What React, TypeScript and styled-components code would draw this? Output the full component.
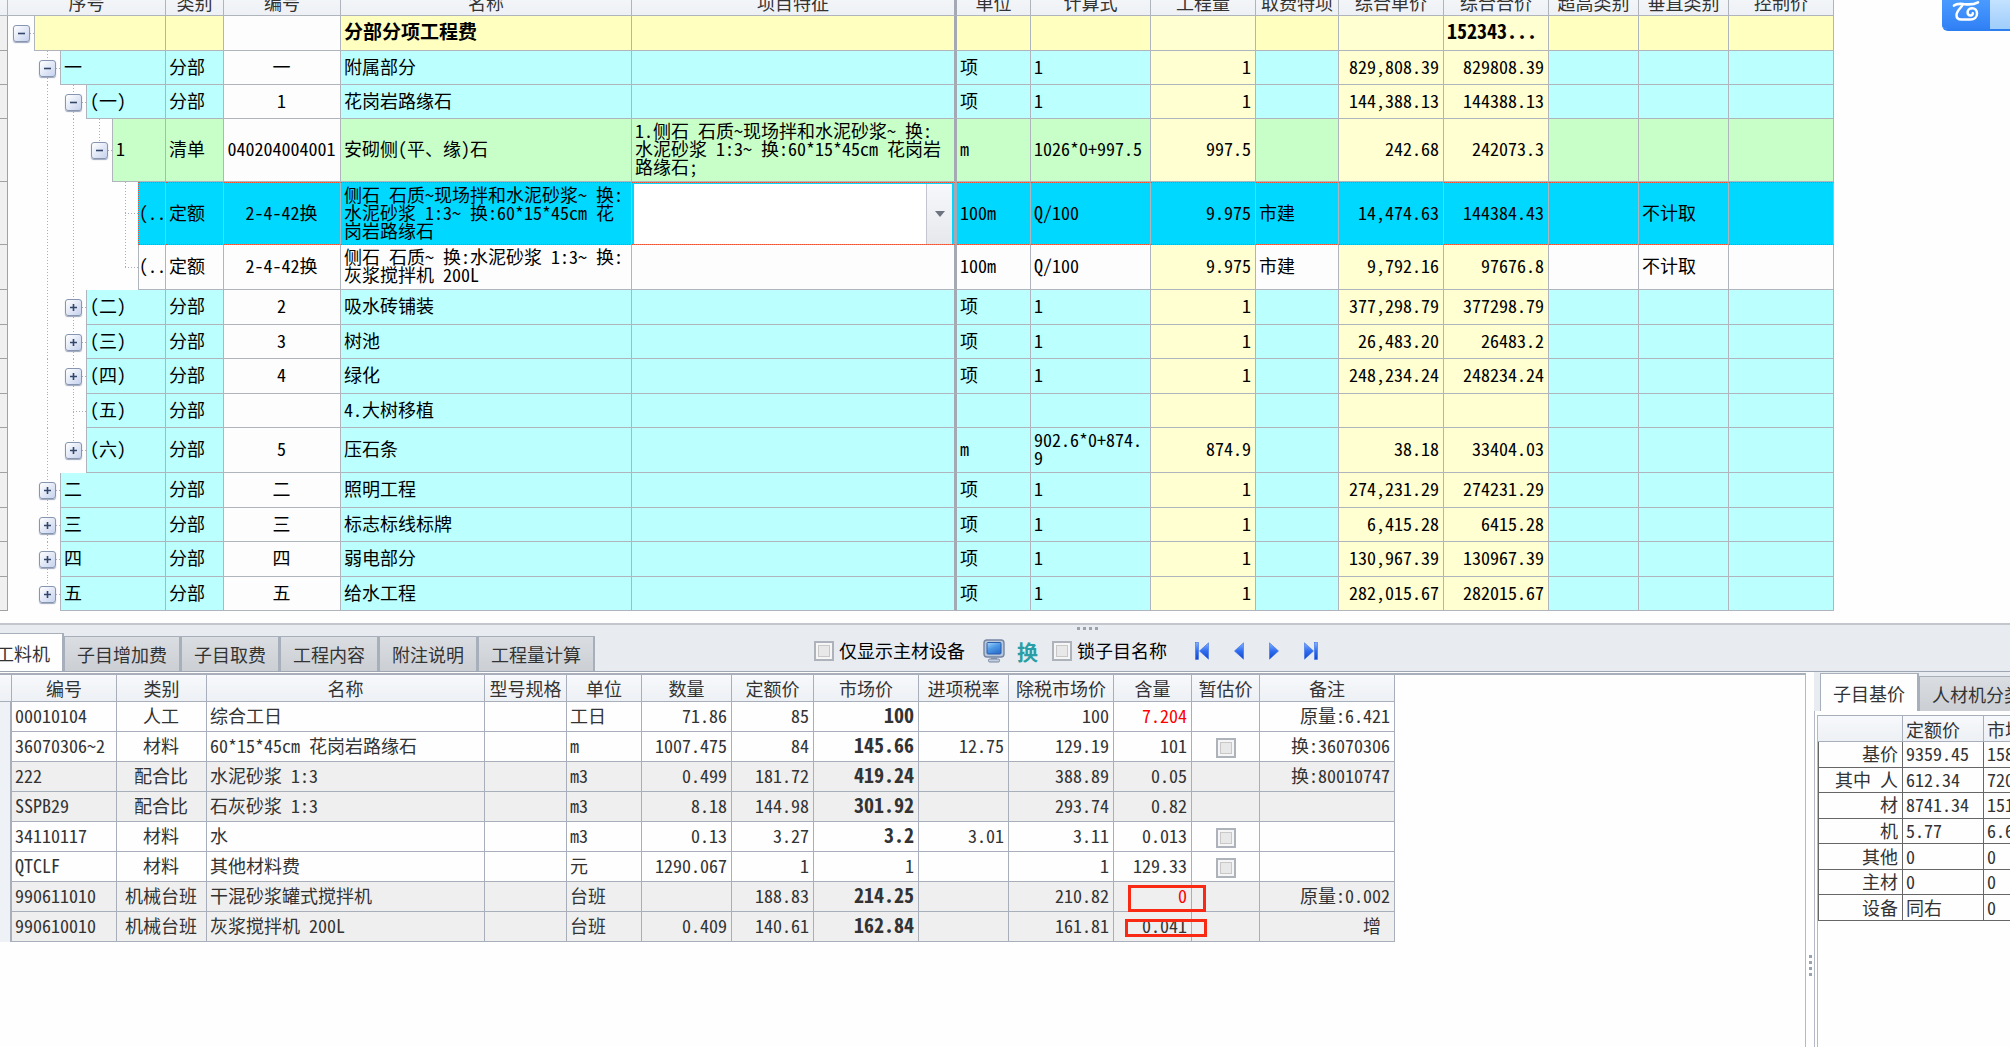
import React from 'react';
import styled, { createGlobalStyle, css } from 'styled-components';

const LINE = '#b0b4bd';
const LOWER_LINE = '#a8afbb';
const PALE_YELLOW = '#ffffd2';
const PLAIN = '#fdfdfd';

const GlobalStyle = createGlobalStyle`
  *, *::before, *::after { box-sizing: border-box; }
  body {
    margin: 0;
    background: #fefefe;
    color: #000;
    font-family: "Noto Sans Mono CJK SC", "Noto Sans CJK SC", monospace;
    font-size: 18px;
    line-height: 18px;
  }
  button, input, select { font: inherit; color: inherit; margin: 0; padding: 0; }
`;

const Page = styled.main`
  display: flex;
  flex-direction: column;
  min-height: 100vh;
  position: relative;
  overflow: hidden;
`;

/* ---------- upper grid ---------- */

const BudgetPane = styled.section`
  margin-top: -10px;
  padding-bottom: 12px;
`;

const Grid = styled.table`
  table-layout: fixed;
  border-collapse: separate;
  border-spacing: 0;
  width: 1px;
`;

const HeadCell = styled.th<{ $thick?: boolean }>`
  height: 26px;
  padding: 0 2px 2px;
  font-weight: 400;
  color: #333;
  white-space: nowrap;
  overflow: hidden;
  text-align: center;
  background: linear-gradient(#f7f9fc, #edf0f4);
  border-right: ${(p) => (p.$thick ? '3px solid #a4a9b4' : `1px solid ${LINE}`)};
  border-bottom: 1px solid ${LINE};
`;

const Gutter = styled.td`
  background: #f0f0f0;
  border-right: 1px solid #a2a2a2;
  border-bottom: 1px solid #a2a2a2;
`;

type Tone = 'total' | 'section' | 'list' | 'selected' | 'plain';

const toneColor: Record<Tone, string> = {
  total: '#ffffc0',
  section: '#bbffff',
  list: '#c8ffc8',
  selected: '#00d8ff',
  plain: PLAIN,
};

const selectedEdge = css`
  border-top: 1px dotted #f0502f;
  border-bottom: 1px dotted #f0502f;
`;

const GridRow = styled.tr<{ $height: number }>`
  height: ${(p) => p.$height}px;
`;

const Cell = styled.td<{
  $tone: Tone;
  $fill?: string;
  $align?: 'left' | 'center' | 'right';
  $thick?: boolean;
  $strong?: number;
}>`
  padding: 0 4px 4px 3px;
  text-align: ${(p) => p.$align ?? 'left'};
  background: ${(p) => (p.$fill && p.$tone !== 'selected' ? p.$fill : toneColor[p.$tone])};
  border-right: ${(p) => (p.$thick ? '3px solid #a4a9b4' : `1px solid ${LINE}`)};
  border-bottom: 1px solid ${LINE};
  white-space: pre;
  overflow: hidden;
  ${(p) => p.$tone === 'selected' && selectedEdge}
  ${(p) => p.$strong && css`font-weight: 700; font-size: ${p.$strong}px;`}
`;

const EditorCell = styled(Cell)`
  padding: 0 2px;
`;

const TreeCell = styled.td`
  padding: 0;
  background: #fefefe;
`;

const TreeLine = styled.div<{ $height: number }>`
  display: flex;
  height: ${(p) => p.$height}px;
`;

type Guide = 'none' | 'through' | 'tee' | 'end' | 'root';

const dotsDown = 'repeating-linear-gradient(180deg, #a9aeb8 0 1px, transparent 1px 3px)';
const dotsAcross = 'repeating-linear-gradient(90deg, #a9aeb8 0 1px, transparent 1px 3px)';

const guideStyles: Record<Guide, ReturnType<typeof css> | string> = {
  none: '',
  through: css`background: ${dotsDown} center top / 1px 100% no-repeat;`,
  tee: css`
    background:
      ${dotsDown} center top / 1px 100% no-repeat,
      ${dotsAcross} right center / 50% 1px no-repeat;
  `,
  end: css`
    background:
      ${dotsDown} center top / 1px 50% no-repeat,
      ${dotsAcross} right center / 50% 1px no-repeat;
  `,
  root: css`background: ${dotsAcross} right center / 50% 1px no-repeat;`,
};

const GuideSlot = styled.span<{ $guide: Guide }>`
  flex: 0 0 26px;
  display: flex;
  align-items: center;
  justify-content: center;
  ${(p) => guideStyles[p.$guide]}
`;

const Toggle = styled.button`
  display: flex;
  align-items: center;
  justify-content: center;
  width: 17px;
  height: 17px;
  border: 1px solid #8795b0;
  border-radius: 3px;
  background: linear-gradient(135deg, #ffffff, #c6d2ee);
  box-shadow: 0 1px 1px rgba(90, 105, 140, 0.6);
`;

const TreeLabel = styled.span<{ $tone: Tone; $tight?: boolean }>`
  flex: 1;
  min-width: 0;
  display: flex;
  align-items: center;
  padding: 0 0 4px ${(p) => (p.$tight ? 0 : 3)}px;
  overflow: hidden;
  white-space: nowrap;
  background: ${(p) => toneColor[p.$tone]};
  border-left: 1px solid ${LINE};
  border-right: 1px solid ${LINE};
  border-bottom: 1px solid ${LINE};
  ${(p) => p.$tone === 'selected' && css`${selectedEdge} border-left: 1px dotted #f0502f;`}
`;

const Combo = styled.div`
  position: relative;
  height: 60px;
`;

const ComboSelect = styled.select`
  appearance: none;
  display: block;
  width: 100%;
  height: 100%;
  border: 0;
  border-radius: 0;
  background: #fff;
`;

const ComboArrow = styled.span`
  position: absolute;
  inset: 0 0 0 auto;
  width: 26px;
  display: flex;
  align-items: center;
  justify-content: center;
  pointer-events: none;
  border-left: 1px solid #c3c6cd;
  background: linear-gradient(#f6f8fb, #e6e8ec);
`;

/* ---------- band between the panes ---------- */

const Band = styled.section`
  border-top: 2px solid #c3c6cd;
  border-bottom: 1px solid #9fa6b3;
  background: #e8ebf0;
`;

const SplitHandle = styled.div`
  display: flex;
  height: 8px;
  padding: 2px 0 0 1077px;
`;

const Dots = styled.span<{ $vertical?: boolean }>`
  display: flex;
  flex-direction: ${(p) => (p.$vertical ? 'column' : 'row')};
  gap: 3px;
  i {
    width: 3px;
    height: 3px;
    background: #9aa2ae;
  }
`;

const BandRow = styled.div`
  display: flex;
  height: 38px;
  align-items: stretch;
`;

const Tabs = styled.nav<{ $cut?: boolean }>`
  display: flex;
  align-items: flex-end;
  flex: none;
  margin-left: ${(p) => (p.$cut ? '-17px' : '0')};
`;

const Tab = styled.button<{ $active?: boolean }>`
  height: ${(p) => (p.$active ? 38 : 35)}px;
  padding: 0 12px;
  border: 1px solid #a7afbb;
  border-right-width: 2px;
  border-bottom: 0;
  color: #333;
  white-space: nowrap;
  background: ${(p) => (p.$active ? '#fefefe' : 'linear-gradient(#dadee2, #cbcfd4)')};
`;

const Tools = styled.div`
  display: flex;
  align-items: center;
  margin-left: 219px;
  padding-bottom: 3px;
`;

const CheckLabel = styled.label`
  display: flex;
  align-items: center;
  gap: 5px;
  white-space: nowrap;
`;

const CheckText = styled.span`
  padding-bottom: 2px;
`;

const Check = styled.input`
  appearance: none;
  display: inline-block;
  flex: none;
  width: 20px;
  height: 20px;
  vertical-align: middle;
  border: 2px solid #aeb2ba;
  background: #e8e8e8;
  box-shadow: inset 0 0 0 2px #f6f6f6, inset 0 0 0 3px #c8c8c8;
`;

const ToolButton = styled.button<{ $gap: number }>`
  display: flex;
  align-items: center;
  border: 0;
  background: none;
  margin-left: ${(p) => p.$gap}px;
`;

const SwapText = styled.span`
  font-family: "Noto Sans CJK SC", sans-serif;
  font-size: 21px;
  line-height: 24px;
  font-weight: 700;
  color: #2a9ea6;
  padding-right: 14px;
`;

/* ---------- lower panes ---------- */

const Lower = styled.section`
  flex: 1;
  display: flex;
  min-width: 0;
`;

const ResourcePane = styled.div`
  flex: 1;
  min-width: 0;
  margin-top: 1px;
  border-top: 2px solid ${LOWER_LINE};
  border-right: 1px solid #b4bac5;
  overflow: hidden;
  color: #333;
`;

const ResHead = styled(HeadCell)`
  height: 27px;
  padding: 0 2px;
  border-color: ${LOWER_LINE};
`;

const ResGutter = styled.td`
  background: #eef1f5;
  border-right: 2px solid ${LOWER_LINE};
`;

const ResRow = styled.tr<{ $grey?: boolean }>`
  height: 30px;
  background: ${(p) => (p.$grey ? '#efefef' : '#fefefe')};
`;

const ResCell = styled.td<{ $align?: 'left' | 'center' | 'right'; $strong?: boolean; $alert?: boolean }>`
  position: relative;
  padding: 0 4px 4px 3px;
  text-align: ${(p) => p.$align ?? 'left'};
  white-space: pre;
  border-right: 1px solid ${LOWER_LINE};
  border-bottom: 1px solid ${LOWER_LINE};
  ${(p) => p.$strong && css`font-weight: 700; font-size: 20px;`}
  ${(p) => p.$alert && css`color: #ff0000;`}
`;

const CheckCell = styled(ResCell)`
  padding: 0;
`;

const Marker = styled.span<{ $low?: boolean }>`
  position: absolute;
  z-index: 1;
  border: 3px solid #f92a14;
  left: ${(p) => (p.$low ? 11 : 14)}px;
  top: ${(p) => (p.$low ? 7 : 3)}px;
  width: ${(p) => (p.$low ? 82 : 78)}px;
  height: ${(p) => (p.$low ? 18 : 27)}px;
`;

const SideSplit = styled.div`
  flex: 0 0 8px;
  display: flex;
  justify-content: center;
  padding-top: 283px;
`;

const SidePane = styled.aside`
  flex: 0 0 196px;
  display: flex;
  flex-direction: column;
  overflow: hidden;
  color: #333;
`;

const SideTabs = styled.div`
  display: flex;
  height: 39px;
  padding: 1px 0 0 6px;
  background: #e8ebf0;
`;

const SideBody = styled.div`
  flex: 1;
  padding: 4px 0 0 2px;
  border-left: 1px solid #b4bac5;
`;

const SideInner = styled.div`
  height: 100%;
  border-left: 1px solid #b4bac5;
  border-top: 1px solid ${LOWER_LINE};
`;

const PriceTable = styled.table`
  table-layout: fixed;
  border-collapse: separate;
  border-spacing: 0;
  width: 1px;
  height: 205px;
`;

const PriceHead = styled.th`
  height: 26px;
  padding: 0 3px;
  text-align: left;
  font-weight: 400;
  white-space: nowrap;
  background: linear-gradient(#f7f9fc, #edf0f4);
  border-right: 1px solid ${LOWER_LINE};
  border-bottom: 1px solid ${LOWER_LINE};
`;

const PriceName = styled.th`
  padding: 0 4px 2px 0;
  text-align: right;
  font-weight: 400;
  white-space: pre;
  border-left: 1px solid #666;
  border-right: 1px solid #666;
  border-bottom: 1px solid #666;
`;

const PriceCell = styled.td`
  padding: 0 3px 2px;
  border-right: 1px solid #666;
  border-bottom: 1px solid #666;
`;

/* ---------- floating badge ---------- */

const Badge = styled.button`
  position: absolute;
  top: 0;
  right: 0;
  display: flex;
  width: 68px;
  height: 31px;
  border: 0;
  border-bottom: 2px solid #2d7ff0;
  border-bottom-left-radius: 6px;
  overflow: hidden;
  background: linear-gradient(#c3e2ff, #9fcdfb);
`;

const BadgeIcon = styled.span`
  width: 48px;
  height: 31px;
  background: linear-gradient(#4a9bff, #2f7ff5);
`;

/* ---------- data ---------- */

type BudgetRow = {
  label: string;
  level: number;
  guides: Guide[];
  toggle?: '+' | '-';
  tone: Tone;
  height: number;
  kind?: string;
  code?: string;
  name: string;
  feature?: string;
  unit?: string;
  formula?: string;
  qty?: string;
  fee?: string;
  price?: string;
  total?: string;
  vertical?: string;
};

const budgetRows: BudgetRow[] = [
  { label: '', level: 0, guides: ['root'], toggle: '-', tone: 'total', height: 35, name: '分部分项工程费', total: '152343...' },
  { label: '一', level: 1, guides: ['none', 'tee'], toggle: '-', tone: 'section', height: 34, kind: '分部', code: '一', name: '附属部分', unit: '项', formula: '1', qty: '1', price: '829,808.39', total: '829808.39' },
  { label: '(一)', level: 2, guides: ['none', 'through', 'tee'], toggle: '-', tone: 'section', height: 34, kind: '分部', code: '1', name: '花岗岩路缘石', unit: '项', formula: '1', qty: '1', price: '144,388.13', total: '144388.13' },
  { label: '1', level: 3, guides: ['none', 'through', 'through', 'end'], toggle: '-', tone: 'list', height: 63, kind: '清单', code: '040204004001', name: '安砌侧(平、缘)石', feature: '1.侧石 石质~现场拌和水泥砂浆~ 换:\n水泥砂浆 1:3~ 换:60*15*45cm 花岗岩\n路缘石;', unit: 'm', formula: '1026*0+997.5', qty: '997.5', price: '242.68', total: '242073.3' },
  { label: '(..', level: 4, guides: ['none', 'through', 'through', 'none', 'tee'], tone: 'selected', height: 63, kind: '定额', code: '2-4-42换', name: '侧石 石质~现场拌和水泥砂浆~ 换:\n水泥砂浆 1:3~ 换:60*15*45cm 花\n岗岩路缘石', unit: '100m', formula: 'Q/100', qty: '9.975', fee: '市建', price: '14,474.63', total: '144384.43', vertical: '不计取' },
  { label: '(..', level: 4, guides: ['none', 'through', 'through', 'none', 'end'], tone: 'plain', height: 45, kind: '定额', code: '2-4-42换', name: '侧石 石质~ 换:水泥砂浆 1:3~ 换:\n灰浆搅拌机 200L', unit: '100m', formula: 'Q/100', qty: '9.975', fee: '市建', price: '9,792.16', total: '97676.8', vertical: '不计取' },
  { label: '(二)', level: 2, guides: ['none', 'through', 'tee'], toggle: '+', tone: 'section', height: 35, kind: '分部', code: '2', name: '吸水砖铺装', unit: '项', formula: '1', qty: '1', price: '377,298.79', total: '377298.79' },
  { label: '(三)', level: 2, guides: ['none', 'through', 'tee'], toggle: '+', tone: 'section', height: 34, kind: '分部', code: '3', name: '树池', unit: '项', formula: '1', qty: '1', price: '26,483.20', total: '26483.2' },
  { label: '(四)', level: 2, guides: ['none', 'through', 'tee'], toggle: '+', tone: 'section', height: 35, kind: '分部', code: '4', name: '绿化', unit: '项', formula: '1', qty: '1', price: '248,234.24', total: '248234.24' },
  { label: '(五)', level: 2, guides: ['none', 'through', 'tee'], tone: 'section', height: 34, kind: '分部', name: '4.大树移植' },
  { label: '(六)', level: 2, guides: ['none', 'through', 'end'], toggle: '+', tone: 'section', height: 45, kind: '分部', code: '5', name: '压石条', unit: 'm', formula: '902.6*0+874.\n9', qty: '874.9', price: '38.18', total: '33404.03' },
  { label: '二', level: 1, guides: ['none', 'tee'], toggle: '+', tone: 'section', height: 35, kind: '分部', code: '二', name: '照明工程', unit: '项', formula: '1', qty: '1', price: '274,231.29', total: '274231.29' },
  { label: '三', level: 1, guides: ['none', 'tee'], toggle: '+', tone: 'section', height: 34, kind: '分部', code: '三', name: '标志标线标牌', unit: '项', formula: '1', qty: '1', price: '6,415.28', total: '6415.28' },
  { label: '四', level: 1, guides: ['none', 'tee'], toggle: '+', tone: 'section', height: 35, kind: '分部', code: '四', name: '弱电部分', unit: '项', formula: '1', qty: '1', price: '130,967.39', total: '130967.39' },
  { label: '五', level: 1, guides: ['none', 'end'], toggle: '+', tone: 'section', height: 34, kind: '分部', code: '五', name: '给水工程', unit: '项', formula: '1', qty: '1', price: '282,015.67', total: '282015.67' },
];

const budgetCols = [8, 158, 58, 117, 291, 325, 74, 120, 105, 83, 105, 105, 90, 90, 105];
const budgetHeads = ['', '序号', '类别', '编号', '名称', '项目特征', '单位', '计算式', '工程量', '取费特项', '综合单价', '综合合价', '超高类别', '垂直类别', '控制价'];

type Resource = {
  code: string; kind: string; name: string; unit: string; qty: string; quota: string;
  market: string; rate: string; net: string; content: string; note: string;
  grey?: boolean; alert?: boolean; check?: boolean; regular?: boolean; mark?: 'high' | 'low';
};

const resources: Resource[] = [
  { code: '00010104', kind: '人工', name: '综合工日', unit: '工日', qty: '71.86', quota: '85', market: '100', rate: '', net: '100', content: '7.204', note: '原量:6.421', alert: true },
  { code: '36070306~2', kind: '材料', name: '60*15*45cm 花岗岩路缘石', unit: 'm', qty: '1007.475', quota: '84', market: '145.66', rate: '12.75', net: '129.19', content: '101', note: '换:36070306', check: true },
  { code: '222', kind: '配合比', name: '水泥砂浆 1:3', unit: 'm3', qty: '0.499', quota: '181.72', market: '419.24', rate: '', net: '388.89', content: '0.05', note: '换:80010747', grey: true },
  { code: 'SSPB29', kind: '配合比', name: '石灰砂浆 1:3', unit: 'm3', qty: '8.18', quota: '144.98', market: '301.92', rate: '', net: '293.74', content: '0.82', note: '', grey: true },
  { code: '34110117', kind: '材料', name: '水', unit: 'm3', qty: '0.13', quota: '3.27', market: '3.2', rate: '3.01', net: '3.11', content: '0.013', note: '', check: true },
  { code: 'QTCLF', kind: '材料', name: '其他材料费', unit: '元', qty: '1290.067', quota: '1', market: '1', rate: '', net: '1', content: '129.33', note: '', check: true, regular: true },
  { code: '990611010', kind: '机械台班', name: '干混砂浆罐式搅拌机', unit: '台班', qty: '', quota: '188.83', market: '214.25', rate: '', net: '210.82', content: '0', note: '原量:0.002', grey: true, alert: true, mark: 'high' },
  { code: '990610010', kind: '机械台班', name: '灰浆搅拌机 200L', unit: '台班', qty: '0.409', quota: '140.61', market: '162.84', rate: '', net: '161.81', content: '0.041', note: '增 ', grey: true, mark: 'low' },
];

const resCols = [12, 105, 90, 278, 82, 75, 90, 82, 105, 90, 105, 78, 68, 135];
const resHeads = ['', '编号', '类别', '名称', '型号规格', '单位', '数量', '定额价', '市场价', '进项税率', '除税市场价', '含量', '暂估价', '备注'];

const prices: [string, string, string][] = [
  ['基价', '9359.45', '158'],
  ['其中 人', '612.34', '720'],
  ['材', '8741.34', '151'],
  ['机', '5.77', '6.6'],
  ['其他', '0', '0'],
  ['主材', '0', '0'],
  ['设备', '同右', '0'],
];

/* ---------- icons ---------- */

const ToggleGlyph = ({ sign }: { sign: '+' | '-' }) => (
  <svg width="9" height="9" viewBox="0 0 9 9" stroke="#33476b" strokeWidth="1.6" aria-hidden="true">
    <path d={sign === '+' ? 'M1 4.5h7M4.5 1v7' : 'M1 4.5h7'} />
  </svg>
);

const MonitorIcon = () => (
  <svg width="22" height="24" viewBox="0 0 22 24" aria-hidden="true">
    <defs>
      <linearGradient id="screen" x1="0" y1="0" x2="0.6" y2="1">
        <stop offset="0" stopColor="#a9d6fb" />
        <stop offset="0.5" stopColor="#4f9be6" />
        <stop offset="1" stopColor="#2f73cf" />
      </linearGradient>
    </defs>
    <rect x="1" y="1" width="20" height="17" rx="3" fill="#b9c7da" stroke="#7787a3" strokeWidth="1.4" />
    <rect x="4" y="3.5" width="14" height="11.5" rx="1" fill="url(#screen)" stroke="#2b5fae" />
    <path d="M8 18h6v2.5H8z" fill="#8b9ab3" />
    <rect x="5.5" y="20" width="11" height="3" rx="1.2" fill="#c3cede" stroke="#7787a3" />
  </svg>
);

const NavIcon = ({ kind }: { kind: 'first' | 'prev' | 'next' | 'last' }) => {
  const wide = kind === 'first' || kind === 'last';
  const flip = kind === 'next' || kind === 'last';
  const w = wide ? 14 : 10;
  return (
    <svg width={w} height="18" viewBox={`0 0 ${w} 18`} aria-hidden="true">
      <defs>
        <linearGradient id={`nav-${kind}`} x1="0" y1="0" x2="0" y2="1">
          <stop offset="0" stopColor="#86b4ff" />
          <stop offset="0.5" stopColor="#2f6df0" />
          <stop offset="1" stopColor="#1746c8" />
        </linearGradient>
      </defs>
      <g transform={flip ? `translate(${w} 0) scale(-1 1)` : undefined} fill={`url(#nav-${kind})`} stroke="#3a70e6" strokeWidth="0.6">
        {wide && <rect x="0.5" y="0.5" width="3" height="17" />}
        <path d={wide ? 'M13.5 0.8v16.4L4.500 9z' : 'M9.5 0.8v16.4L0.5 9z'} />
      </g>
    </svg>
  );
};

const CloudGlyph = () => (
  <svg width="48" height="29" viewBox="0 0 48 29" fill="none" stroke="#fff" strokeLinecap="round" aria-hidden="true">
    <path d="M12 5.600c3-2.600 6.500-1.800 10.500-1.400 5 .5 9.500 .4 13.500-1.800" strokeWidth="2.600" />
    <path d="M20.500 5c-1.500 3-6 6-6 10 0 2.800 1.800 4.500 4.800 4.500h9.200c4 0 6.500-2.500 6.500-6 0-3.200-2-5.300-4.800-5.300-2.700 0-4.600 1.800-4.600 4 0 2 1.400 3.200 3 3.200 1.300 0 2.200-.9 2.200-2.100" strokeWidth="2.500" />
  </svg>
);

/* ---------- parts ---------- */

const Columns = ({ widths }: { widths: number[] }) => (
  <colgroup>
    {widths.map((w, i) => (
      <col key={i} width={w} />
    ))}
  </colgroup>
);

const BudgetLine = ({ row }: { row: BudgetRow }) => {
  const t = row.tone;
  const strong = t === 'total';
  return (
    <GridRow $height={row.height}>
      <Gutter />
      <TreeCell>
        <TreeLine $height={row.height}>
          {row.guides.map((guide, i) => (
            <GuideSlot key={i} $guide={guide}>
              {row.toggle && i === row.level && (
                <Toggle type="button" aria-label={row.toggle === '+' ? '展开' : '折叠'}>
                  <ToggleGlyph sign={row.toggle} />
                </Toggle>
              )}
            </GuideSlot>
          ))}
          <TreeLabel $tone={t} $tight={row.level === 4}>{row.label}</TreeLabel>
        </TreeLine>
      </TreeCell>
      <Cell $tone={t}>{row.kind}</Cell>
      <Cell $tone={t} $fill={PLAIN} $align="center">{row.code}</Cell>
      <Cell $tone={t} $strong={strong ? 19 : undefined}>{row.name}</Cell>
      {t === 'selected' ? (
        <EditorCell $tone={t} $thick>
          <Combo>
            <ComboSelect aria-label="项目特征" defaultValue="">
              <option value="" />
            </ComboSelect>
            <ComboArrow>
              <svg width="10" height="6" viewBox="0 0 10 6" aria-hidden="true">
                <path d="M0 0h10L5 6z" fill="#6d747f" />
              </svg>
            </ComboArrow>
          </Combo>
        </EditorCell>
      ) : (
        <Cell $tone={t} $thick>{row.feature}</Cell>
      )}
      <Cell $tone={t}>{row.unit}</Cell>
      <Cell $tone={t}>{row.formula}</Cell>
      <Cell $tone={t} $fill={PALE_YELLOW} $align="right">{row.qty}</Cell>
      <Cell $tone={t}>{row.fee}</Cell>
      <Cell $tone={t} $fill={PALE_YELLOW} $align="right">{row.price}</Cell>
      <Cell $tone={t} $fill={PALE_YELLOW} $align={strong ? 'left' : 'right'} $strong={strong ? 20 : undefined}>
        {row.total}
      </Cell>
      <Cell $tone={t} />
      <Cell $tone={t}>{row.vertical}</Cell>
      <Cell $tone={t} />
    </GridRow>
  );
};

const ResourceLine = ({ r }: { r: Resource }) => (
  <ResRow $grey={r.grey}>
    <ResGutter />
    <ResCell>{r.code}</ResCell>
    <ResCell $align="center">{r.kind}</ResCell>
    <ResCell>{r.name}</ResCell>
    <ResCell />
    <ResCell>{r.unit}</ResCell>
    <ResCell $align="right">{r.qty}</ResCell>
    <ResCell $align="right">{r.quota}</ResCell>
    <ResCell $align="right" $strong={!r.regular}>{r.market}</ResCell>
    <ResCell $align="right">{r.rate}</ResCell>
    <ResCell $align="right">{r.net}</ResCell>
    <ResCell $align="right" $alert={r.alert}>
      {r.content}
      {r.mark && <Marker $low={r.mark === 'low'} />}
    </ResCell>
    <CheckCell $align="center">{r.check && <Check type="checkbox" aria-label={`${r.name} 暂估价`} />}</CheckCell>
    <ResCell $align="right">{r.note}</ResCell>
  </ResRow>
);

export default function App() {
  return (
    <Page>
      <GlobalStyle />
      <BudgetPane>
        <Grid>
          <Columns widths={budgetCols} />
          <thead>
            <tr>
              {budgetHeads.map((h, i) => (
                <HeadCell key={i} scope="col" $thick={h === '项目特征'}>{h}</HeadCell>
              ))}
            </tr>
          </thead>
          <tbody>
            {budgetRows.map((row, i) => (
              <BudgetLine key={i} row={row} />
            ))}
          </tbody>
        </Grid>
      </BudgetPane>

      <Band>
        <SplitHandle>
          <Dots><i /><i /><i /><i /></Dots>
        </SplitHandle>
        <BandRow>
          <Tabs $cut>
            <Tab type="button" $active>工料机</Tab>
            <Tab type="button">子目增加费</Tab>
            <Tab type="button">子目取费</Tab>
            <Tab type="button">工程内容</Tab>
            <Tab type="button">附注说明</Tab>
            <Tab type="button">工程量计算</Tab>
          </Tabs>
          <Tools>
            <CheckLabel>
              <Check type="checkbox" />
              <CheckText>仅显示主材设备</CheckText>
            </CheckLabel>
            <ToolButton type="button" aria-label="显示设备" $gap={18}><MonitorIcon /></ToolButton>
            <ToolButton type="button" $gap={12}><SwapText>换</SwapText></ToolButton>
            <CheckLabel>
              <Check type="checkbox" />
              <CheckText>锁子目名称</CheckText>
            </CheckLabel>
            <ToolButton type="button" aria-label="第一条" $gap={28}><NavIcon kind="first" /></ToolButton>
            <ToolButton type="button" aria-label="上一条" $gap={25}><NavIcon kind="prev" /></ToolButton>
            <ToolButton type="button" aria-label="下一条" $gap={25}><NavIcon kind="next" /></ToolButton>
            <ToolButton type="button" aria-label="最后一条" $gap={25}><NavIcon kind="last" /></ToolButton>
          </Tools>
        </BandRow>
      </Band>

      <Lower>
        <ResourcePane>
          <Grid>
            <Columns widths={resCols} />
            <thead>
              <tr>
                {resHeads.map((h, i) => (
                  <ResHead key={i} scope="col">{h}</ResHead>
                ))}
              </tr>
            </thead>
            <tbody>
              {resources.map((r) => (
                <ResourceLine key={r.code} r={r} />
              ))}
            </tbody>
          </Grid>
        </ResourcePane>
        <SideSplit>
          <Dots $vertical><i /><i /><i /><i /></Dots>
        </SideSplit>
        <SidePane>
          <SideTabs>
            <Tabs>
              <Tab type="button" $active>子目基价</Tab>
              <Tab type="button">人材机分类</Tab>
            </Tabs>
          </SideTabs>
          <SideBody>
            <SideInner>
              <PriceTable>
                <Columns widths={[85, 81, 81]} />
                <thead>
                  <tr>
                    <PriceHead scope="col" />
                    <PriceHead scope="col">定额价</PriceHead>
                    <PriceHead scope="col">市场价</PriceHead>
                  </tr>
                </thead>
                <tbody>
                  {prices.map(([name, quota, market]) => (
                    <tr key={name}>
                      <PriceName scope="row">{name}</PriceName>
                      <PriceCell>{quota}</PriceCell>
                      <PriceCell>{market}</PriceCell>
                    </tr>
                  ))}
                </tbody>
              </PriceTable>
            </SideInner>
          </SideBody>
        </SidePane>
      </Lower>

      <Badge type="button" aria-label="云服务">
        <BadgeIcon><CloudGlyph /></BadgeIcon>
      </Badge>
    </Page>
  );
}
